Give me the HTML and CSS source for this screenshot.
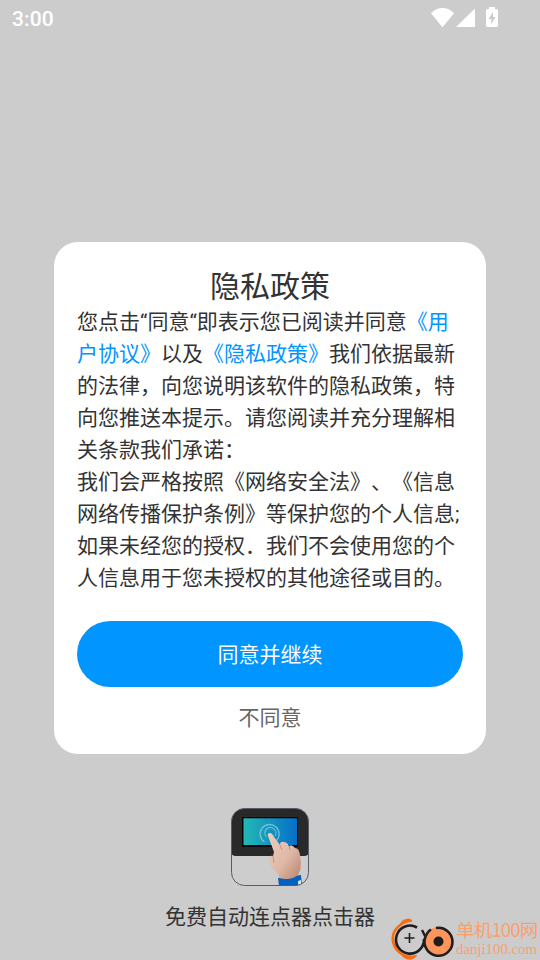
FILE: index.html
```html
<!DOCTYPE html>
<html lang="zh-CN">
<head>
<meta charset="utf-8">
<title>隐私政策</title>
<link rel="stylesheet" href="styles.css">
</head>
<body>
<div class="screen">
  <header class="status">
    <span class="clock">3:00</span>
    <svg class="status-icons" width="70" height="24" viewBox="430 6 70 24" fill="#fff">
      <path d="M442.500 27.200L431 13.300Q436 8 442.500 8Q449 8 454 13.300Z"/>
      <path d="M475 8.500V27H456Z"/>
      <path fill-rule="evenodd" d="M489 9V7H495V9H496.500Q498 9 498 10.500V25.500Q498 27 496.500 27H487.500Q486 27 486 25.500V10.500Q486 9 487.500 9ZM493 12L488.500 19H491.200V24L495.500 17H493Z"/>
    </svg>
  </header>
  <main class="dialog">
    <h1 class="title">隐私政策</h1>
    <p class="copy">您点击“同意“即表示您已阅读并同意<a class="link">《用<br>户协议》</a>以及<a class="link">《隐私政策》</a>我们依据最新<br>的法律，向您说明该软件的隐私政策，特<br>向您推送本提示。请您阅读并充分理解相<br>关条款我们承诺：<br>我们会严格按照《网络安全法》、《信息<br>网络传播保护条例》等保护您的个人信息;<br>如果未经您的授权．我们不会使用您的个<br>人信息用于您未授权的其他途径或目的。</p>
    <button class="agree">同意并继续</button>
    <button class="decline">不同意</button>
  </main>
  <footer class="brand">
    <svg class="app-icon" width="78" height="78" viewBox="0 0 78 78">
      <defs>
        <linearGradient id="display" x1="0" x2="1" y1="0" y2="0"><stop offset="0" stop-color="#22b9b5"/><stop offset="1" stop-color="#066fca"/></linearGradient>
        <linearGradient id="skin" x1="0" x2="1" y1="0" y2="1"><stop offset="0" stop-color="#edcdbd"/><stop offset=".55" stop-color="#dfb9a7"/><stop offset="1" stop-color="#b98370"/></linearGradient>
        <clipPath id="tile"><rect x=".5" y=".5" width="77" height="77" rx="13"/></clipPath>
      </defs>
      <g clip-path="url(#tile)">
        <rect width="78" height="78" fill="#cdcdcd"/>
        <path d="M0 0H78V43Q78 48 73 48H5Q0 48 0 43Z" fill="#292929"/>
        <rect x="11" y="9" width="56" height="30" fill="#050708"/>
        <rect x="12.500" y="10.300" width="53.500" height="26.700" fill="url(#display)"/>
        <g fill="none" stroke="#a5d5e1" stroke-opacity=".65"><path d="M33.500 34A9.500 9.500 0 1 1 45 33" stroke-width="1.300"/><path d="M35.500 29A5.500 5.500 0 1 1 44 28" stroke-width="1.200"/></g>
        <path d="M47 70L70 67L71 78H48Z" fill="#0561bb"/>
        <path d="M67 73L70 72V77H67Z" fill="#d9e5ec"/>
        <path d="M37 28Q36 25 39 25Q41 25 43 29L49 37Q49 33 53 34Q56 34 58 38Q61 36 64 40Q68 40 69 47L70 56Q70 62 67 67Q60 73 48 70Q48 66 44 63Q38 57 38 51Q39 47 42 48L43 44Z" fill="url(#skin)"/>
        <path d="M49 37L51 42M58 38L59 42M42 48L43 55" fill="none" stroke="#bc8875" stroke-width=".8"/>
      </g>
      <rect x=".5" y=".5" width="77" height="77" rx="13" fill="none" stroke="#555b67"/>
    </svg>
    <span class="app-name">免费自动连点器点击器</span>
  </footer>
  <aside class="watermark">
    <svg width="66" height="44" viewBox="390 916 66 44" fill="none">
      <path d="M412 920Q409 917 403 920Q400 924 396 927Q390 934 392 943Q394 951 401 955Q406 961 413 959Q417 957 417 955Q404 957 398 949Q389 935 401 926Q406 922 412 922Z" fill="#f86c16"/>
      <path d="M417 927.500A14 14 0 1 0 424 939" stroke="#211c1d" stroke-width="2.600"/>
      <path d="M404.500 938H414.500M409.500 933V943" stroke="#211c1d" stroke-width="1.600"/>
      <circle cx="438.500" cy="941.500" r="14.500" fill="#fc965a"/>
      <path d="M436 928A14 14 0 1 1 425 938Q427 932 431 929.500" stroke="#211c1d" stroke-width="2.600"/>
      <path d="M422 930L425 936" stroke="#211c1d" stroke-width="2.400"/>
      <circle cx="438.500" cy="941.500" r="5" fill="#211c1d"/>
    </svg>
    <div class="mark-text"><span class="mark-name">单机100网</span><span class="mark-url">danji100.com</span></div>
  </aside>
</div>
</body>
</html>
```
FILE: styles.css
```css
* { box-sizing: border-box; }
body { margin: 0; }
.screen {
  position: relative;
  width: 540px;
  height: 960px;
  overflow: hidden;
  display: flex;
  flex-direction: column;
  align-items: center;
  background: #ccc;
  color: #333;
  font-family: Roboto, "Noto Sans CJK SC", sans-serif;
  font-size: 21px;
  text-spacing-trim: space-all;
}
.status {
  width: 100%;
  height: 36px;
  padding: 6px 40px 0 12px;
  display: flex;
  justify-content: space-between;
  color: #fff;
}
.clock { font-weight: 500; line-height: 26px; letter-spacing: .15px; }
.dialog {
  width: 432px;
  height: 512px;
  margin-top: 206px;
  padding: 24px 23px 0;
  display: flex;
  flex-direction: column;
  background: #fff;
  border-radius: 24px;
}
.title {
  margin: 0;
  font-size: 30px;
  line-height: 42px;
  font-weight: 400;
  text-align: center;
}
.copy { margin: -2px 0 0; line-height: 32px; white-space: nowrap; }
.link { color: #0095ff; }
.agree, .decline {
  border: 0;
  padding: 0 0 2px;
  font: inherit;
}
.agree {
  height: 66px;
  margin-top: 27px;
  border-radius: 33px;
  background: #0095ff;
  color: #fff;
}
.decline { height: 32px; margin-top: 14px; background: none; color: #666; }
.brand { margin-top: 54px; display: flex; flex-direction: column; align-items: center; }
.app-icon { display: block; }
.app-name { margin-top: 15px; line-height: 32px; }
.watermark {
  position: absolute;
  left: 390px;
  top: 916px;
  display: flex;
  color: #f9a06c;
}
.mark-text { display: flex; flex-direction: column; white-space: nowrap; }
.mark-name { font: 18.5px/27px "Noto Sans CJK SC", sans-serif; letter-spacing: -.8px; }
.mark-url { font: 14.8px/12px "Liberation Serif", serif; }
```
